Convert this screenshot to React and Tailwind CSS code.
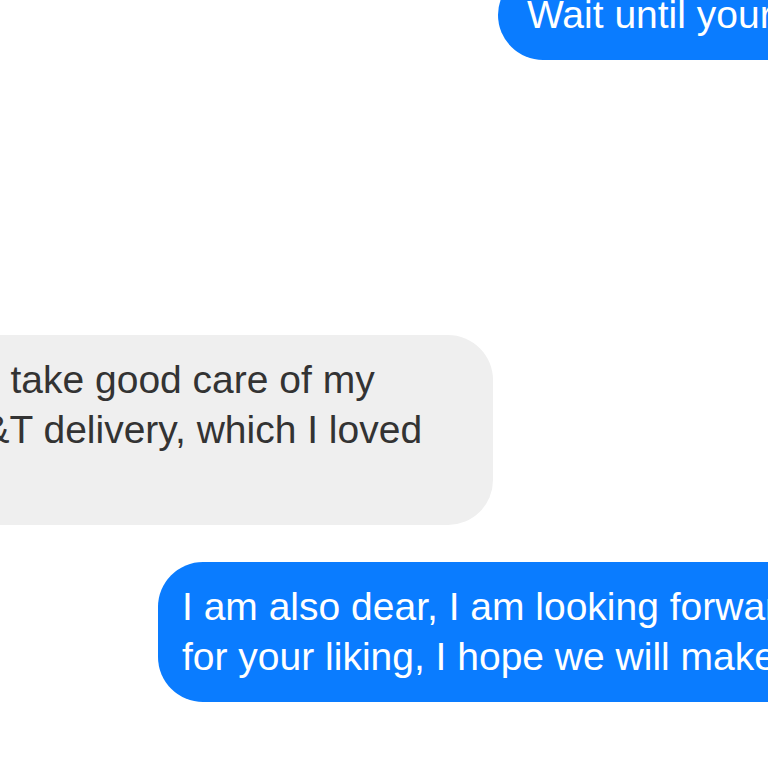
export default function App() {
    return (
        <div
            className="w-[768px] h-[768px] overflow-hidden bg-white flex flex-col"
            style={{ fontFamily: '"Liberation Sans", Arial, sans-serif' }}
        >
            {/* sent */}
            <div className="mt-[-30px] ml-[498px] w-[640px] shrink-0 rounded-[45px] bg-[#0a7cff] text-white pl-[29px] py-[20px] text-[39px] leading-[50px] whitespace-nowrap">
                Wait until your order arrives
            </div>

            {/* received */}
            <div className="mt-[275px] ml-[-60px] w-[553px] shrink-0 rounded-[45px] bg-[#efefef] text-[#333333] pl-[24px] py-[20px] text-[39px] leading-[50px] whitespace-nowrap">
                I'll take good care of my
                <br />
                J&amp;T delivery, which I loved
                <br />
                it.
            </div>

            {/* sent */}
            <div className="mt-[37px] ml-[158px] w-[720px] shrink-0 rounded-[45px] bg-[#0a7cff] text-white pl-[24px] py-[20px] text-[39px] leading-[50px] whitespace-nowrap">
                I am also dear, I am looking forward to it
                <br />
                for your liking, I hope we will make it
            </div>
        </div>
    );
}
